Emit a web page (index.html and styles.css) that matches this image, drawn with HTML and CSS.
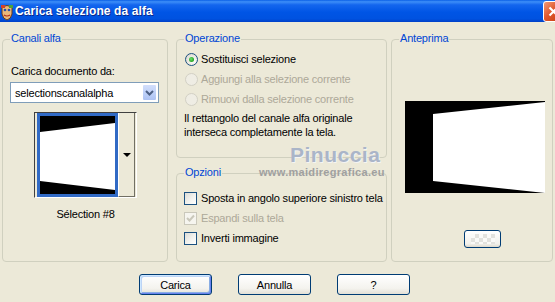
FILE: index.html
```html
<!DOCTYPE html>
<html lang="it">
<head>
    <meta charset="UTF-8">
    <meta name="viewport" content="width=device-width, initial-scale=1.0">
    <title>Carica selezione da alfa</title>
    <link rel="stylesheet" href="styles.css">
</head>
<body>
    <div class="window">
        <div class="titlebar">
            <svg class="app-icon" width="14" height="17" viewBox="0 0 14 17">
                <path d="M2 3 Q7 0 12 3 L12 10 Q11 15 7 16 Q3 15 2 10 Z" fill="#e9b77a" stroke="#6b3a1a" stroke-width="1"/>
                <circle cx="5" cy="6" r="1.3" fill="#2a4fa8"/>
                <circle cx="9" cy="6" r="1.3" fill="#2a4fa8"/>
                <path d="M4 11 Q7 13 10 11" fill="none" stroke="#b02a18" stroke-width="1.2"/>
                <rect x="1" y="1" width="4" height="3" fill="#d2402a"/>
                <rect x="9" y="1" width="4" height="3" fill="#4aa33a"/>
            </svg>
            <span class="title">Carica selezione da alfa</span>
            <span class="close-btn">
                <svg width="11" height="11" viewBox="0 0 11 11">
                    <path d="M1.5 1.5 L9.5 9.5 M9.5 1.5 L1.5 9.5" stroke="#fff" stroke-width="2.2"/>
                </svg>
            </span>
        </div>

        <div class="content">
            <div class="groups">
                <fieldset class="group group-channels">
                    <legend>Canali alfa</legend>
                    <div class="field-label">Carica documento da:</div>
                    <div class="combo">
                        <span class="combo-text">selectionscanalalpha</span>
                        <span class="combo-btn">
                            <svg width="9" height="6" viewBox="0 0 9 6">
                                <path d="M1 1 L4.5 4.5 L8 1" fill="none" stroke="#4d6185" stroke-width="2"/>
                            </svg>
                        </span>
                    </div>
                    <div class="thumb-picker">
                        <div class="thumb">
                            <svg width="75" height="78" viewBox="0 0 75 78">
                                <rect width="75" height="78" fill="#000"/>
                                <polygon points="0,16 75,7 75,74 0,65" fill="#fff"/>
                            </svg>
                        </div>
                        <div class="thumb-drop"><span class="tri"></span></div>
                    </div>
                    <div class="thumb-caption">Sélection #8</div>
                </fieldset>

                <div class="col-middle">
                    <fieldset class="group group-op">
                        <legend>Operazione</legend>
                        <div class="option">
                            <span class="radio checked"></span>
                            <span>Sostituisci selezione</span>
                        </div>
                        <div class="option disabled">
                            <span class="radio"></span>
                            <span>Aggiungi alla selezione corrente</span>
                        </div>
                        <div class="option disabled">
                            <span class="radio"></span>
                            <span>Rimuovi dalla selezione corrente</span>
                        </div>
                        <p class="note">Il rettangolo del canale alfa originale interseca completamente la tela.</p>
                    </fieldset>

                    <fieldset class="group group-opt">
                        <legend>Opzioni</legend>
                        <div class="option">
                            <span class="check"></span>
                            <span>Sposta in angolo superiore sinistro tela</span>
                        </div>
                        <div class="option disabled">
                            <span class="check checked">
                                <svg width="9" height="8" viewBox="0 0 9 8">
                                    <path d="M1 4 L3.5 6.5 L8 1.5" fill="none" stroke="#cac8bb" stroke-width="2"/>
                                </svg>
                            </span>
                            <span>Espandi sulla tela</span>
                        </div>
                        <div class="option">
                            <span class="check"></span>
                            <span>Inverti immagine</span>
                        </div>
                    </fieldset>
                </div>

                <fieldset class="group group-preview">
                    <legend>Anteprima</legend>
                    <svg class="preview-img" width="140" height="92" viewBox="0 0 140 92">
                        <rect width="140" height="92" fill="#000"/>
                        <polygon points="28,13 140,1 140,92 28,80" fill="#fff"/>
                    </svg>
                    <div class="bg-btn"><span class="bg-swatch"></span></div>
                </fieldset>
            </div>

            <div class="buttons">
                <button class="btn default">Carica</button>
                <button class="btn">Annulla</button>
                <button class="btn">?</button>
            </div>
        </div>

        <div class="watermark">
            <div class="wm-name">Pinuccia</div>
            <div class="wm-site">www.maidiregrafica.eu</div>
        </div>
    </div>
</body>
</html>
```

FILE: styles.css
```css
* {
    margin: 0;
    padding: 0;
    box-sizing: border-box;
}

body {
    font-family: 'Liberation Sans', Arial, sans-serif;
    font-size: 11px;
    letter-spacing: -0.2px;
    color: #000;
    background: #ece9d8;
}

.window {
    position: relative;
    width: 555px;
    height: 302px;
    background: #ece9d8;
    overflow: hidden;
}

/* title bar */
.titlebar {
    height: 22px;
    display: flex;
    align-items: center;
    background: linear-gradient(to bottom, #0a5fe6 0%, #3d8ef8 8%, #1466ee 22%, #0055e5 55%, #0052e0 85%, #0040c8 100%);
}

.app-icon {
    margin-left: 0;
    margin-top: 2px;
}

.title {
    margin-left: 1px;
    color: #fff;
    font-size: 12px;
    font-weight: bold;
    letter-spacing: 0.1px;
    text-shadow: 1px 1px 0 #0a2a8a;
}

.close-btn {
    margin-left: auto;
    margin-right: -9px;
    width: 21px;
    height: 21px;
    display: flex;
    align-items: center;
    justify-content: center;
    border: 1px solid #fff;
    border-radius: 3px;
    background: linear-gradient(135deg, #f29a78 0%, #e0582e 45%, #c63c10 100%);
}

/* content */
.content {
    padding: 9px 0 0 2px;
}

.groups {
    display: flex;
    align-items: flex-start;
}

.group {
    border: 1px solid #d0d0bf;
    border-radius: 4px;
    padding: 0 7px;
    min-width: 0;
}

.group legend {
    color: #0046d5;
    line-height: 14px;
    padding: 0 1px 2px;
}

.group-channels {
    width: 166px;
    height: 231px;
}

.col-middle {
    margin-left: 8px;
    width: 211px;
}

.group-op {
    height: 127px;
}

.group-opt {
    margin-top: 7px;
    height: 97px;
}

.group-preview {
    margin-left: 4px;
    width: 162px;
    height: 231px;
}

/* alpha channels column */
.field-label {
    margin: 18px 0 0 1px;
    line-height: 13px;
}

.combo {
    margin-top: 4px;
    width: 149px;
    height: 21px;
    display: flex;
    align-items: center;
    border: 1px solid #7f9db9;
    background: #fff;
}

.combo-text {
    padding-left: 4px;
    flex: 1;
}

.combo-btn {
    width: 15px;
    height: 17px;
    margin-right: 1px;
    display: flex;
    align-items: center;
    justify-content: center;
    border: 1px solid #fff;
    border-radius: 2px;
    background: linear-gradient(to bottom, #d2defb 0%, #bccff8 60%, #adc2f2 100%);
}

.thumb-picker {
    margin: 9px 0 0 24px;
    width: 103px;
    height: 86px;
    display: flex;
    border-top: 1px solid #404040;
    border-left: 1px solid #404040;
    border-right: 1px solid #fff;
    border-bottom: 1px solid #fff;
}

.thumb {
    margin-left: 2px;
    width: 81px;
    height: 84px;
    border: 3px solid #316ac5;
    background: #000;
}

.thumb svg {
    display: block;
}

.thumb-drop {
    width: 17px;
    display: flex;
    align-items: center;
    justify-content: center;
    background: #ece9d8;
    border-left: 1px solid #fff;
    border-right: 1px solid #716f64;
    border-bottom: 1px solid #716f64;
}

.tri {
    width: 0;
    height: 0;
    border-left: 4px solid transparent;
    border-right: 4px solid transparent;
    border-top: 4px solid #000;
}

.thumb-caption {
    margin: 10px 0 0 24px;
    width: 103px;
    text-align: center;
    line-height: 13px;
}

/* options */
.option {
    height: 20px;
    display: flex;
    align-items: center;
    white-space: nowrap;
}

.group-op .option:first-of-type {
    margin-top: 2px;
}

.group-opt .option:first-of-type {
    margin-top: 7px;
}

.option.disabled {
    color: #aca899;
}

.radio {
    flex: none;
    width: 13px;
    height: 13px;
    margin: 0 3px 0 1px;
    border: 1px solid #1c5180;
    border-radius: 50%;
    background: radial-gradient(circle at 65% 65%, #fff 0%, #e6e4dc 60%, #d4d1c6 100%);
    display: flex;
    align-items: center;
    justify-content: center;
}

.radio.checked::after {
    content: "";
    width: 5px;
    height: 5px;
    border-radius: 50%;
    background: radial-gradient(circle at 40% 40%, #6ee26e 0%, #21a121 70%, #1a8a1a 100%);
}

.option.disabled .radio {
    border-color: #d2d0c4;
    background: #efede4;
}

.check {
    flex: none;
    width: 13px;
    height: 13px;
    margin-right: 4px;
    border: 1px solid #1c5180;
    background: linear-gradient(135deg, #dcdcd7 0%, #f4f4f0 60%, #fff 100%);
    display: flex;
    align-items: center;
    justify-content: center;
}

.option.disabled .check {
    border-color: #cac8bb;
    background: #f6f5ef;
}

.note {
    margin-top: 2px;
    line-height: 14px;
}

/* preview */
.preview-img {
    display: block;
    margin: 54px 0 0 6px;
}

.bg-btn {
    margin: 37px 0 0 65px;
    width: 37px;
    height: 18px;
    border: 1px solid #003c74;
    border-radius: 3px;
    background: linear-gradient(to bottom, #fff 0%, #f2f1ec 80%, #dcd8cc 100%);
    display: flex;
    align-items: center;
    justify-content: center;
}

.bg-swatch {
    width: 24px;
    height: 10px;
    background: repeating-conic-gradient(#e2e2de 0% 25%, #fafaf8 0% 50%) 0 0 / 8px 8px;
}

/* buttons */
.buttons {
    margin-top: 12px;
    padding-left: 137px;
    display: flex;
    gap: 26px;
}

.btn {
    width: 73px;
    height: 21px;
    font-family: 'Liberation Sans', Arial, sans-serif;
    font-size: 11px;
    letter-spacing: -0.2px;
    color: #000;
    border: 1px solid #003c74;
    border-radius: 3px;
    background: linear-gradient(to bottom, #fff 0%, #f4f3ee 70%, #e3e0d6 100%);
}

.btn.default {
    box-shadow: inset 1px 1px 0 #cee7ff, inset -1px -1px 0 #6982ee, inset 2px 2px 0 #bcd4f6, inset -2px -2px 0 #89ade4;
}

/* watermark over the dialog */
.watermark {
    position: absolute;
    left: 259px;
    top: 144px;
    pointer-events: none;
}

.wm-name {
    margin-left: 31px;
    font-size: 21px;
    line-height: 22px;
    font-weight: bold;
    letter-spacing: 0.5px;
    color: #aab5c8;
    text-shadow: 1px 1px 0 #f4f4f4;
}

.wm-site {
    font-size: 11px;
    line-height: 12px;
    font-weight: bold;
    letter-spacing: 0.3px;
    color: #a0a0a0;
}
```
